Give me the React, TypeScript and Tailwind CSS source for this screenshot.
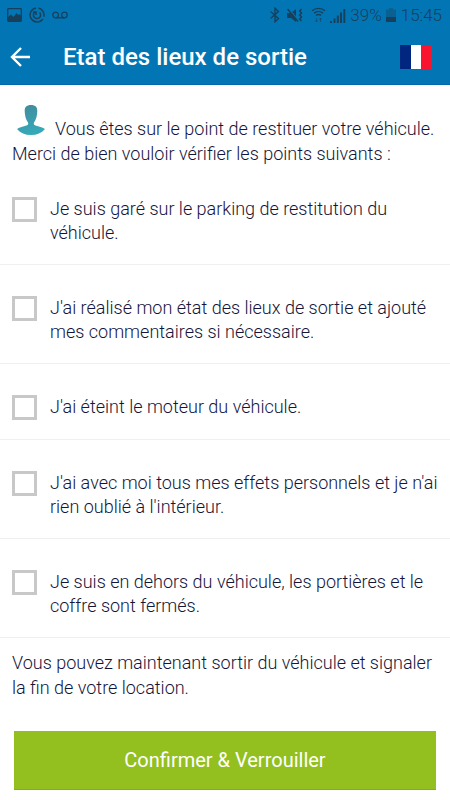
import React, { useState } from "react";

const CHECKS = [
  "Je suis garé sur le parking de restitution du véhicule.",
  "J'ai réalisé mon état des lieux de sortie et ajouté mes commentaires si nécessaire.",
  "J'ai éteint le moteur du véhicule.",
  "J'ai avec moi tous mes effets personnels et je n'ai rien oublié à l'intérieur.",
  "Je suis en dehors du véhicule, les portières et le coffre sont fermés.",
];

const StatusBar: React.FC = () => (
  <div className="flex h-[30px] items-center justify-between pl-[7px] pr-2 text-[#17405c]">
    <div className="flex items-center gap-[7px]">
      <svg width="15" height="14" viewBox="0 0 15 14" fill="none" stroke="currentColor" strokeWidth="1.3">
        <rect x="0.7" y="0.7" width="13.6" height="12.6" rx="0.8" />
        <path d="M1 9l3-2.5L6.5 9l3-4L11 7l1.500-1L14 8v5H1z" fill="currentColor" stroke="none" />
      </svg>
      <svg width="16" height="16" viewBox="0 0 16 16" fill="none" stroke="currentColor" strokeWidth="1.5">
        <path d="M7 1a7 7 0 1 0 6.8 11M9.500 1.100a7 7 0 0 1 5.300 8.600" />
        <path d="M5.500 5.400a3.600 3.600 0 1 0 5 0M4 5h3v3" />
      </svg>
      <svg width="16" height="8" viewBox="0 0 16 8" fill="none" stroke="currentColor" strokeWidth="1.3">
        <circle cx="3.6" cy="4" r="2.8" />
        <circle cx="12.4" cy="4" r="2.8" />
        <path d="M3.6 6.8h8.8" />
      </svg>
    </div>
    <div className="flex items-center">
      <svg width="10" height="16" viewBox="0 0 10 16" fill="none" stroke="currentColor" strokeWidth="1.4">
        <path d="M0.5 4.500l8 7L5 14.800V1.200l3.500 3.300-8 7" />
      </svg>
      <svg className="ml-[7px]" width="16" height="15" viewBox="0 0 16 15" fill="none" stroke="currentColor">
        <path d="M0 5h4l5-4v13l-5-4H0z" fill="currentColor" stroke="none" />
        <path d="M1.500 0.500l10.500 12.500" stroke="#0276b5" strokeWidth="1.2" />
        <path d="M0.500 1l10.500 12.500" strokeWidth="1.5" />
        <path d="M14.500 1l-1.800 2 1.800 2-1.800 2 1.800 2-1.800 2 1.800 2" strokeWidth="1.5" />
      </svg>
      <svg className="ml-2" width="15" height="16" viewBox="0 0 15 16" fill="none" stroke="currentColor" strokeWidth="1.4">
        <path d="M1 3.800a10 10 0 0 1 13 0M3 6.200a7 7 0 0 1 9 0M5 8.500a4 4 0 0 1 5 0" />
        <path d="M5.500 11v4M4 13.300l1.500 1.700L7 13.300M9.500 15v-4M8 12.700L9.500 11l1.500 1.700" strokeWidth="0.9" opacity="0.6" />
      </svg>
      <svg className="ml-1" width="16" height="15" viewBox="0 0 16 15" fill="currentColor">
        <path d="M0 13h2v2H0zM3.500 10.500h2V15h-2zM6.800 7.500h2V15h-2zM10 4.500h2V15h-2zM13.300 1h2v14h-2z" />
      </svg>
      <span className="ml-1 text-[17px] leading-6 font-light">39%</span>
      <svg className="ml-1" width="10" height="14" viewBox="0 0 10 14" fill="currentColor">
        <path d="M3 0h4v1.5h3V9H0V1.5h3z" opacity="0.4" />
        <path d="M0 9h10v5H0z" />
      </svg>
      <span className="ml-[5px] text-[17px] leading-6 font-light">15:45</span>
    </div>
  </div>
);

const UserIcon: React.FC = () => (
  <svg className="ml-[5px] mr-[10px] inline-block align-baseline" width="28" height="30" viewBox="0 0 28 30">
    <defs>
      <linearGradient id="user-fill" x1="0" y1="0" x2="0.3" y2="1">
        <stop offset="0" stopColor="#43889a" />
        <stop offset="1" stopColor="#36a9b8" />
      </linearGradient>
    </defs>
    <path
      fill="url(#user-fill)"
      d="M14 0C9.5 0 7.500 2.200 7.700 6c.1 4 1 8.500 3.300 11.500.6 1.500 0 2.500-1.500 3C6 21.500 3 22 0 24c3.500 4 8 6 14 6s10.500-2 14-6c-3-2-6-2.500-9.500-3.500-1.500-.5-2.100-1.500-1.500-3 2.300-3 3.200-7.500 3.300-11.500C20.500 2.200 18.500 0 14 0z"
    />
  </svg>
);

const App: React.FC = () => {
  const [checked, setChecked] = useState<boolean[]>(CHECKS.map(() => false));

  const toggle = (index: number) => {
    setChecked(prev => prev.map((value, i) => (i === index ? !value : value)));
  };

  return (
    <div className="min-h-screen bg-white font-[Roboto,sans-serif] text-lg font-light text-[#14153a]">
      <header className="border-b border-[#0064ae] bg-[#0276b5]">
        <StatusBar />
        <div className="flex h-[54px] items-center pl-[10px] pr-[18px] text-white">
          <button aria-label="Retour" className="cursor-pointer">
            <svg width="21" height="20" viewBox="0 0 21 20" fill="none" stroke="currentColor" strokeWidth="2.4">
              <path d="M20 10H2M11 1l-9 9 9 9" />
            </svg>
          </button>
          <h1 className="ml-8 flex-1 text-2xl font-medium">Etat des lieux de sortie</h1>
          <button aria-label="Français" className="flex h-6 w-8 cursor-pointer">
            <span className="h-full flex-1 bg-[#00267f]" />
            <span className="h-full flex-1 bg-white" />
            <span className="h-full flex-1 bg-[#f8142f]" />
          </button>
        </div>
      </header>

      <main>
        <p className="px-3 pt-5 leading-[25px]">
          <UserIcon />
          Vous êtes sur le point de restituer votre véhicule. Merci de bien vouloir vérifier les points suivants :
        </p>

        <ul>
          {CHECKS.map((label, index) => (
            <li key={label} className="border-b border-[#efefef]">
              <label className="flex cursor-pointer items-start gap-[13px] px-3 pt-[31px] pb-[19px] leading-6">
                <input
                  type="checkbox"
                  checked={checked[index]}
                  onChange={() => toggle(index)}
                  className="size-[25px] shrink-0 appearance-none border-3 border-[#c8c8c8] bg-white checked:bg-[#93c01f]"
                />
                <span>{label}</span>
              </label>
            </li>
          ))}
        </ul>

        <p className="px-3 pt-3 leading-[25px]">
          Vous pouvez maintenant sortir du véhicule et signaler la fin de votre location.
        </p>

        <div className="px-[14px] pt-[31px] pb-[10px]">
          <button className="h-[59px] w-full cursor-pointer border-b border-[#84b00c] bg-[#93c01f] text-xl font-normal text-white">
            Confirmer &amp; Verrouiller
          </button>
        </div>
      </main>
    </div>
  );
};

export default App;
